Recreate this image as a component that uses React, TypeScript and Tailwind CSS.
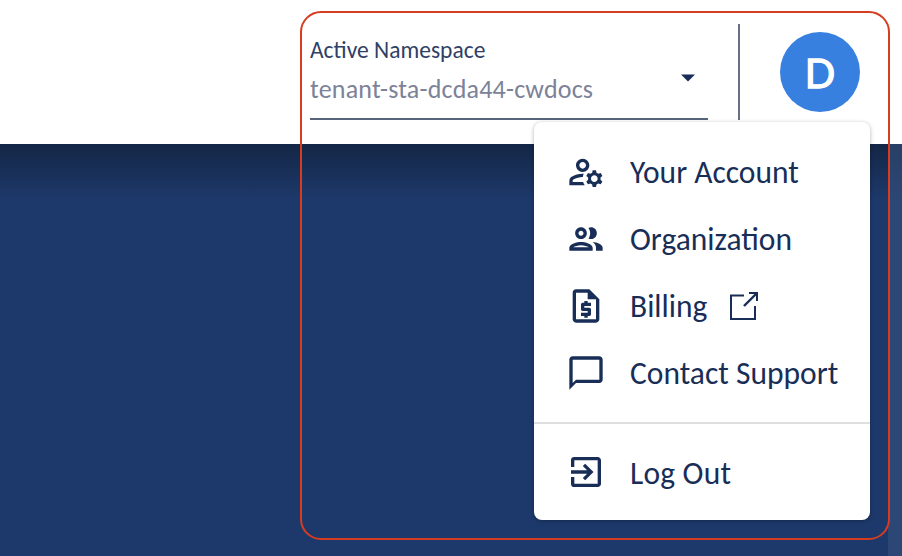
import React from "react";
import { MdOutlineManageAccounts, MdOutlineGroup, MdOutlineRequestQuote, MdChatBubbleOutline, MdExitToApp } from "react-icons/md";

function ExternalIcon() {
  return (
    <svg viewBox="0 0 30 30" className="ml-[22px] size-[30px]" fill="none" stroke="currentColor" strokeWidth="2">
      <path d="M15 4.500H2V28h24V15M20 2h8v8" />
      <path d="M28 2L15 15" strokeWidth="2.400" />
    </svg>
  );
}

const row = "flex h-[67px] items-center";
const icon = "mr-6 size-10";
const label = "whitespace-pre scale-y-106";

export default function App() {
  return (
    <div className="relative h-[556px] w-[902px] overflow-hidden bg-[#1d396b] font-['Carlito','Lato',sans-serif] text-[#182e57]">
      <header className="flex h-36 bg-white pl-[310px]">
        <div className="mt-9 h-[84px] w-[398px] border-b-2 border-[#56657a]">
          <div className="h-7 scale-y-106 text-[23.5px] leading-7 text-[#303f66]">Active Namespace</div>
          <div className="flex h-[52px] justify-between">
            <span className="text-[26px] leading-[51px] tracking-[0.2px] text-[#7c8298]">tenant-sta-dcda44-cwdocs</span>
            <svg viewBox="0 0 16 8" className="mt-[10px] mr-3 h-2 w-4" fill="currentColor"><path d="M1 0.500h14L8 7.500z" /></svg>
          </div>
        </div>
        <div className="mt-6 ml-[30px] h-24 w-0.5 bg-[#686f86]" />
        <div className="mt-8 ml-10 flex size-20 items-center justify-center rounded-full bg-[#3880df] pt-px font-['Lato'] text-[40px] text-white [-webkit-text-stroke:1.3px_white]">D</div>
      </header>
      <main className="flex h-[412px] justify-end bg-linear-to-b from-[#142646] via-[#1d396b] via-[56px] to-[#1d396b]">
        <div className="w-3.5 bg-[#37507b]/60" />
      </main>
      <nav className="absolute top-[122px] left-[534px] h-[398px] w-[336px] rounded-lg bg-white shadow-[0_1px_4px_rgba(0,0,0,0.3)]">
        <div className="flex h-[300px] flex-col pt-4 pl-8 text-[31.5px]">
          <div className={row}><MdOutlineManageAccounts className={icon} /><span className={label}>Your Account</span></div>
          <div className={row}><MdOutlineGroup className={icon} /><span className={label}>Organization</span></div>
          <div className={row}><MdOutlineRequestQuote className={icon} /><span className={label}>Billing</span><ExternalIcon /></div>
          <div className={row}><MdChatBubbleOutline className={icon} /><span className={label}>Contact Support</span></div>
        </div>
        <div className="flex h-[98px] items-center border-t-2 border-[#dfdfdf] pl-8 text-[31.5px]"><MdExitToApp className={icon} /><span className="pt-0.5 tracking-[0.2px] whitespace-pre scale-y-106">Log Out</span></div>
      </nav>
      <div className="absolute top-[11px] left-[300px] h-[529px] w-[590px] rounded-[21px] border-2 border-[#d63c20]" />
    </div>
  );
}
